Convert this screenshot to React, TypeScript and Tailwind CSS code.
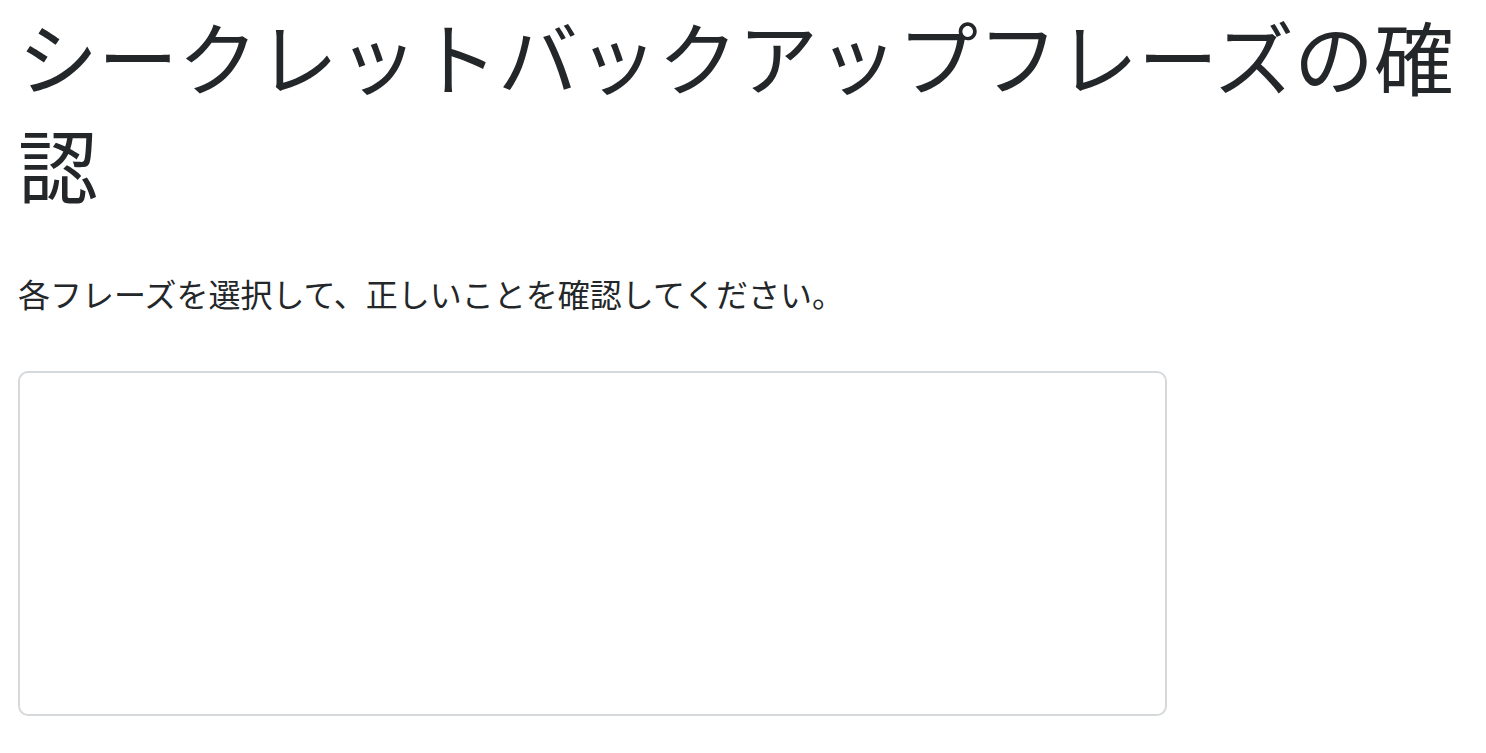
export default function App() {
  return (
    <div className="min-h-screen bg-white px-[18px] text-[#24272a] [font-family:'Noto_Sans_CJK_JP','Noto_Sans',sans-serif]">
      <h1 className="text-[80px] leading-[108px] font-normal">
        シークレットバックアップフレーズの確認
      </h1>
      <p className="mt-[53px] text-[32px] leading-[48px]">
        各フレーズを選択して、正しいことを確認してください。
      </p>
      <div className="mt-[54px] h-[345px] w-[1149px] rounded-[10px] border-2 border-[#d6d9dc] bg-white" />
    </div>
  )
}
